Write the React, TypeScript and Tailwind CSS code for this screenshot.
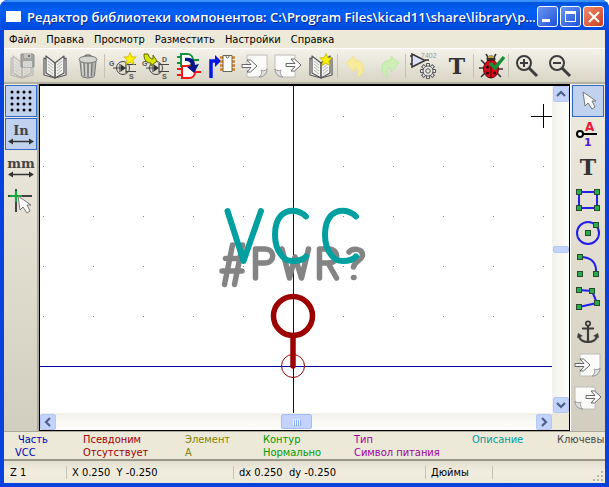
import React from "react";

type Kids = { children?: React.ReactNode };

const Icon = ({ children }: Kids) => (
  <svg viewBox="0 0 28 28" className="h-7 w-7 shrink-0" fill="none" aria-hidden="true">
    {children}
  </svg>
);

const OpenBook = ({ stroke = "#555", fill = "#f2f2ee" }: { stroke?: string; fill?: string }) => (
  <g stroke={stroke} strokeWidth="1.2" strokeLinejoin="round">
    <path d="M3 6v17l11 3 11-3V6l-11 5z" fill={fill} />
    <path d="M5 4v17l9 5 9-5V4l-9 7z" fill={fill} />
    <path d="M14 11v15" strokeWidth="1.6" />
    <path d="M7 9l5 4M7 12l5 4M7 15l5 4M7 18l5 4M21 9l-5 4M21 12l-5 4M21 15l-5 4M21 18l-5 4" stroke="#aaa" strokeWidth="0.9" />
  </g>
);

const Star = ({ x, y }: { x: number; y: number }) => (
  <path
    transform={`translate(${x} ${y})`}
    d="M0-6.5L1.8-2.2 6.2-2 2.8 1 4 5.5 0 3-4 5.5-2.8 1-6.2-2-1.8-2.2z"
    fill="#fff200"
    stroke="#c9b800"
    strokeWidth="0.8"
  />
);

const SaveIcon = () => (
  <Icon>
    <g opacity="0.45"><OpenBook stroke="#888" fill="#ddd" /></g>
    <path d="M13 2h12l1 1v12H13z" fill="#a4a4a2" stroke="#8f8f8d" />
    <path d="M15 9h9v6h-9z" fill="#d6d6d2" />
    <path d="M16 2h7v4h-7z" fill="#c4c4c0" />
    <path d="M20 3h2v2h-2z" fill="#777" />
  </Icon>
);

const BookIcon = () => <Icon><OpenBook /></Icon>;

const TrashIcon = () => (
  <Icon>
    <path d="M6 9h16l-1.500 15c-2 2.500-11 2.500-13 0z" fill="#b4b4b0" stroke="#777" />
    <path d="M10 11l.6 13M14 11v14M18 11l-.6 13" stroke="#777" strokeWidth="1.300" />
    <path d="M8.500 11l.6 12M12 11.500l.2 13M16 11.500l-.2 13" stroke="#e4e4e0" />
    <ellipse cx="14" cy="7.500" rx="9" ry="3.500" fill="#d5d5d1" stroke="#777" />
    <path d="M11 4.500c0-2 6-2 6 0" stroke="#777" strokeWidth="1.500" />
  </Icon>
);

const Transistor = () => (
  <g>
    <circle cx="14" cy="16" r="6.500" stroke="#444" />
    <path d="M4 16h8M17 11v10M17 12.500h10M17 19.500h10M11 12v8" stroke="#444" strokeWidth="1.200" />
    <path d="M12 12.500l5 3.500-5 3.500z" fill="#333" />
    <g fill="#555" className="font-['Liberation_Sans',sans-serif] text-[7px] font-bold">
      <text x="0" y="14">G</text>
      <text x="20" y="27">S</text>
    </g>
  </g>
);

const NewPartIcon = () => <Icon><Transistor /><Star x={21} y={7} /></Icon>;

const LoadPartIcon = () => (
  <Icon>
    <Transistor />
    <text x="20" y="10" fill="#555" className="font-['Liberation_Sans',sans-serif] text-[7px] font-bold">D</text>
    <path d="M2 2c0 7 3 9 7 9v3l6-5-4-6v4c-3 0-4-2-5-5z" fill="#d8e600" stroke="#626b00" />
  </Icon>
);

const GateIcon = () => (
  <Icon>
    <path d="M2 5h4M2 11h4M18 8h6" stroke="#12903a" strokeWidth="2" />
    <path d="M6 2h6c8 0 8 12 0 12H6z" fill="#fff" stroke="#12903a" strokeWidth="2" />
    <path d="M2 17h5M2 23h5M20 20h6" stroke="#f11818" strokeWidth="2" />
    <path d="M7 14h7c8 0 8 12 0 12H7z" fill="#fff" stroke="#f11818" strokeWidth="2" />
    <path d="M10 6c7-1 10 2 10 7l4-1-5 9-7-6 4-1c0-3-1-5-6-5z" fill="#05168c" />
  </Icon>
);

const PinChipIcon = () => (
  <Icon>
    <path d="M3 26V9h5" stroke="#0018e8" strokeWidth="3.500" />
    <path d="M7 3l6 6-6 6z" fill="#0018e8" />
    <path d="M12 5.500h15M12 9.500h15M12 13.500h15M12 17.500h15" stroke="#d98022" strokeWidth="2.500" />
    <path d="M15 3.500h9v16h-9z" fill="#fff" stroke="#665" />
    <path d="M18 4a1.500 2 0 003 0" stroke="#665" />
  </Icon>
);

const sheetBody = "M6 3h20v14c0 5-3 8-7 8H6z";
const sheetFold = "M18 25c3-2 3-5 2-7 2 1 4 1 6-1 0 4-3 8-8 8z";
const arrow = "M0-1.500h9l-4-4.500h3.500l6.500 6-6.500 6H5l4-4.500H0z";

const ImportIcon = () => (
  <Icon>
    <path d={sheetBody} fill="#fbfbfa" stroke="#bcbcb8" />
    <path d={sheetFold} fill="#e2e2e0" stroke="#999" />
    <path transform="translate(1 14)" d={arrow} fill="#fff" stroke="#666" />
  </Icon>
);

const ExportIcon = () => (
  <Icon>
    <g transform="matrix(-1 0 0 1 27 0)">
      <path d={sheetBody} fill="#fbfbfa" stroke="#bcbcb8" />
      <path d={sheetFold} fill="#e2e2e0" stroke="#999" />
    </g>
    <path transform="translate(12 13)" d={arrow} fill="#fff" stroke="#666" />
  </Icon>
);

const NewLibIcon = () => <Icon><OpenBook /><Star x={19} y={8} /></Icon>;

const UndoIcon = () => (
  <Icon>
    <path d="M4 11l8-7v4c8 0 11 6 8 13-1 2-3 3-5 4 3-6 2-9-3-9v4z" fill="#f8eb9c" stroke="#f3e48c" />
  </Icon>
);

const RedoIcon = () => (
  <Icon>
    <path d="M24 11l-8-7v4c-8 0-11 6-8 13 1 2 3 3 5 4-3-6-2-9 3-9v4z" fill="#cdeeb4" stroke="#bfe8a8" />
  </Icon>
);

const GearGateIcon = () => (
  <Icon>
    <text x="11" y="6" fill="#999" className="font-['Liberation_Sans',sans-serif] text-[7px]">7402</text>
    <path d="M0 4h3M0 12h3M15 8h4" stroke="#333" strokeWidth="1.300" />
    <path d="M2 2v13l13-6.500z" fill="#dfe3fa" stroke="#333" strokeWidth="1.500" />
    <g transform="translate(18 19)">
      {[0, 45, 90, 135].map((a) => (
        <path key={a} transform={`rotate(${a})`} d="M-1.500-7.500h3v15h-3z" fill="#eee" stroke="#555" />
      ))}
      <circle r="5" fill="#eee" stroke="#555" />
      <circle r="4" fill="#eee" />
      <circle r="2.300" fill="#ece9d8" stroke="#555" />
    </g>
  </Icon>
);

const TextIcon = () => (
  <Icon>
    <text x="14" y="22" textAnchor="middle" fill="#333" className="font-['DejaVu_Serif',serif] text-[22px] font-bold">T</text>
  </Icon>
);

const BugIcon = () => (
  <Icon>
    <path d="M3 8l5 5M1 16h6M3 25l5-5M23 25l-5-5M25 17h-6M8 2l3 5M18 2l-3 5" stroke="#333" strokeWidth="1.500" />
    <ellipse cx="13" cy="7" rx="4.500" ry="3.500" fill="#333" />
    <path d="M10 5h6" stroke="#e5c94a" strokeWidth="1.500" />
    <ellipse cx="13" cy="17" rx="7.500" ry="9" fill="#d80c1c" stroke="#601" />
    <path d="M13 9v17" stroke="#400" />
    <g fill="#300"><circle cx="9.500" cy="15" r="1.600" /><circle cx="9.500" cy="21" r="1.600" /><circle cx="16.500" cy="21" r="1.600" /><circle cx="16" cy="14" r="1.600" /></g>
    <path d="M12 11l5 5 9-11" stroke="#15913a" strokeWidth="3.500" />
  </Icon>
);

const ZoomGlyph = ({ plus }: { plus?: boolean }) => (
  <Icon>
    <circle cx="11" cy="11" r="7" stroke="#3c3c3c" strokeWidth="2" />
    <path d="M16 16l8 8" stroke="#3c3c3c" strokeWidth="3" />
    <path d={plus ? "M7 11h8M11 7v8" : "M7 11h8"} stroke="#3c3c3c" strokeWidth="2" />
  </Icon>
);

const GridIcon = () => (
  <Icon>
    {[5, 11, 17, 23].map((y) => [5, 11, 17, 23].map((x) => <circle key={`${x}-${y}`} cx={x} cy={y} r="1.500" fill="#000" />))}
  </Icon>
);

const UnitIcon = ({ label }: { label: string }) => (
  <Icon>
    <text x="14" y="15" textAnchor="middle" fill="#444" className="font-['DejaVu_Serif',serif] text-[13px] font-bold">{label}</text>
    <path d="M4 21.500h20" stroke="#333" strokeWidth="1.500" />
    <path d="M1 21.500l5-3v6zM27 21.500l-5-3v6z" fill="#333" />
  </Icon>
);

const Pointer = ({ x, y }: { x: number; y: number }) => (
  <path transform={`translate(${x} ${y})`} d="M0 0l2 14 3-3 4 6 3-2-3-6h4z" fill="#fafafa" stroke="#777" strokeLinejoin="round" />
);

const CursorShapeIcon = () => (
  <Icon>
    <path d="M1 10h24M9 3v23" stroke="#444" strokeWidth="2" />
    <path d="M3 10h12M9 5v11" stroke="#12a83a" strokeWidth="2.200" />
    <Pointer x={11} y={10} />
  </Icon>
);

const PinIcon = () => (
  <Icon>
    <path d="M8 14h15" stroke="#000" strokeWidth="2" />
    <circle cx="6" cy="14" r="3" fill="#fff" stroke="#000" strokeWidth="2" />
    <text x="11" y="11" fill="#ee1c3c" className="font-['DejaVu_Sans',sans-serif] text-[12px] font-bold">A</text>
    <text x="10" y="26" fill="#4a20e0" className="font-['DejaVu_Sans',sans-serif] text-[11px] font-bold">1</text>
  </Icon>
);

const Handles = ({ points }: { points: number[][] }) => (
  <>{points.map(([x, y]) => <rect key={`${x}-${y}`} x={x - 2.500} y={y - 2.500} width="5" height="5" fill="#28ac4e" stroke="#264a2c" />)}</>
);

const RectIcon = () => (
  <Icon><path d="M5 6h18v16H5z" stroke="#2020ea" strokeWidth="2" /><Handles points={[[5, 6], [23, 6], [5, 22], [23, 22]]} /></Icon>
);
const CircleIcon = () => (
  <Icon><circle cx="14" cy="14" r="11" stroke="#2020ea" strokeWidth="2" /><Handles points={[[14, 14], [22, 6]]} /></Icon>
);
const ArcIcon = () => (
  <Icon><path d="M6 5c11 0 17 5 16 17" stroke="#2020ea" strokeWidth="2" /><Handles points={[[6, 5], [6, 22], [22, 22]]} /></Icon>
);
const PolyIcon = () => (
  <Icon><path d="M5 5l13 1 5 12-18 4" stroke="#2020ea" strokeWidth="2" /><Handles points={[[5, 5], [18, 6], [23, 18], [5, 22]]} /></Icon>
);
const AnchorIcon = () => (
  <Icon>
    <circle cx="14" cy="5.500" r="2.200" stroke="#3c3c3c" strokeWidth="1.700" />
    <path d="M14 8v17M8 10.500h12" stroke="#3c3c3c" strokeWidth="2.200" />
    <path d="M5 18c1 8 17 8 18 0" stroke="#3c3c3c" strokeWidth="2.200" />
    <path d="M3 20l1-5 5 3zM25 20l-1-5-5 3z" fill="#3c3c3c" />
  </Icon>
);
const SelectIcon = () => <Icon><Pointer x={9} y={5} /></Icon>;

const ToolButton = ({ label, children }: Kids & { label: string }) => (
  <button type="button" aria-label={label} className="flex h-8 w-[33px] shrink-0 items-center justify-center">
    {children}
  </button>
);

const SideButton = ({ label, active, children }: Kids & { label: string; active?: boolean }) => (
  <button
    type="button"
    aria-label={label}
    aria-pressed={!!active}
    className={`flex h-8 w-8 shrink-0 items-center justify-center border ${active ? "border-[#316ac5] bg-[#c1d2ee]" : "border-transparent"}`}
  >
    {children}
  </button>
);

const Separator = () => <div className="mr-px h-6 w-px shrink-0 bg-[#c5c2b4]" />;

const ScrollButton = ({ label, d }: { label: string; d: string }) => (
  <button type="button" aria-label={label} className="flex h-4 w-4 shrink-0 items-center justify-center rounded-xs border border-[#b4c8f6] bg-[#c3d3fd]">
    <svg viewBox="0 0 10 10" className="h-[10px] w-[10px]" fill="none" aria-hidden="true">
      <path d={d} stroke="#4d6185" strokeWidth="2.200" />
    </svg>
  </button>
);

const MENUS = ["Файл", "Правка", "Просмотр", "Разместить", "Настройки", "Справка"];

const FIELDS = [
  { name: "Часть", value: "VCC", color: "text-[#0000b8]" },
  { name: "Псевдоним", value: "Отсутствует", color: "text-[#a00000]" },
  { name: "Элемент", value: "A", color: "text-[#848400]" },
  { name: "Контур", value: "Нормально", color: "text-[#009a00]" },
  { name: "Тип", value: "Символ питания", color: "text-[#a000a0]" },
  { name: "Описание", value: "", color: "text-[#009a9a]" },
  { name: "Ключевы", value: "", color: "text-[#484848]" },
];

const Drawing = () => (
  <svg viewBox="0 0 512 327" preserveAspectRatio="xMidYMid slice" className="block h-full w-full" fill="none" role="img" aria-label="VCC">
    {[30, 80, 130, 180, 230].map((y) =>
      [3, 53, 103, 153, 203, 253, 303, 353, 403, 453, 503].map((x) => <rect key={`${x}-${y}`} x={x} y={y} width="1" height="1" fill="#888" />)
    )}
    <path d="M253.500 0v327M0 280.500h512" stroke="#0000a8" />
    <g stroke="#848484" strokeWidth="5.500" strokeLinecap="round" strokeLinejoin="round">
      <path d="M192.500 159l-8 39.500M202.500 159l-8 39.500M185.500 172.500h18M182 185h20" />
      <path d="M215.500 192v-29h9c11 0 11 14 0 14h-9" />
      <path d="M242 163l7.500 29 5.500-21 6.500 21 7-29" />
      <path d="M279.500 192v-29h9c11 0 11 14 0 14h-9M288 177l8.500 15" />
      <path d="M309 166c3-4 13.500-4 13.500 3 0 5-8 6-9 12M313.500 191.500h.5" />
    </g>
    <g stroke="#00a0a0" strokeWidth="6" strokeLinecap="round" strokeLinejoin="round">
      <path d="M187.500 125l16 50 17.500-50" />
      <path d="M266 130.500c-7-7-18-8-25-1-8 9-8 29 0 39 3 5 6 6.500 12 6.500s10-1 13-4.500" />
      <path d="M316 130.500c-7-7-18-8-25-1-8 9-8 29 0 39 3 5 6 6.500 12 6.500s10-1 13-4.500" />
    </g>
    <g stroke="#9c0000">
      <circle cx="253" cy="230" r="19.500" strokeWidth="5.500" />
      <path d="M253 250v30" strokeWidth="5.500" strokeLinecap="round" />
      <circle cx="253" cy="280" r="11.500" />
    </g>
    <path d="M491 30.500h21M503.500 18v24" stroke="#000" />
  </svg>
);

export default function App() {
  return (
    <div className="h-screen w-full bg-white">
      <main className="flex h-full w-full flex-col overflow-hidden rounded-t-lg bg-[#0842dc] px-1 pb-1 font-['DejaVu_Sans_Condensed','DejaVu_Sans',sans-serif] text-[11px] leading-[13px] text-black">
        <header className="-mx-1 flex h-[30px] shrink-0 items-center gap-[2px] bg-linear-to-b from-[#0050d8] via-[#0060f8] via-40% to-[#0048dc] pt-[3px] pr-[5px] pl-[6px] shadow-[inset_0_2px_1px_#3b94ff]">
          <div className="mr-1 h-[11px] w-[15px] shrink-0 bg-white" />
          <h1 className="min-w-0 flex-1 overflow-hidden font-['Open_Sans','Noto_Sans',sans-serif] text-[13px] leading-5 font-semibold whitespace-nowrap text-white [text-shadow:1px_1px_#0a2a88]">
            {"Редактор библиотеки компонентов: C:\\Program Files\\kicad11\\share\\library\\p..."}
          </h1>
          <button type="button" aria-label="Свернуть" className="flex h-[21px] w-[21px] items-end rounded-[3px] border border-white bg-linear-to-br from-[#6c95f0] to-[#2050d8] pb-1 pl-1">
            <span className="h-[3px] w-2 bg-white" />
          </button>
          <button type="button" aria-label="Развернуть" className="flex h-[21px] w-[21px] items-center justify-center rounded-[3px] border border-white bg-linear-to-br from-[#6c95f0] to-[#2050d8]">
            <span className="h-[11px] w-[11px] border border-t-3 border-white" />
          </button>
          <button type="button" aria-label="Закрыть" className="flex h-[21px] w-[21px] items-center justify-center rounded-[3px] border border-white bg-linear-to-br from-[#ee8a6c] to-[#cc3a14]">
            <svg viewBox="0 0 12 12" className="h-3 w-3" aria-hidden="true"><path d="M1 1l10 10M11 1L1 11" stroke="#fff" strokeWidth="2" /></svg>
          </button>
        </header>

        <nav className="flex h-[18px] shrink-0 items-center gap-[10px] bg-[#ece9d8] pl-[5px]">
          {MENUS.map((m) => <button key={m} type="button">{m}</button>)}
        </nav>

        <div role="toolbar" className="flex h-9 shrink-0 items-center overflow-hidden border-t border-b-2 border-t-white border-b-[#b5b1a2] bg-linear-to-b from-[#f4f2ea] to-[#d9d5c6] pl-px">
          <ToolButton label="Сохранить"><SaveIcon /></ToolButton>
          <ToolButton label="Выбрать библиотеку"><BookIcon /></ToolButton>
          <ToolButton label="Удалить"><TrashIcon /></ToolButton>
          <Separator />
          <ToolButton label="Новый компонент"><NewPartIcon /></ToolButton>
          <ToolButton label="Загрузить компонент"><LoadPartIcon /></ToolButton>
          <ToolButton label="Создать из текущего"><GateIcon /></ToolButton>
          <ToolButton label="Обновить компонент"><PinChipIcon /></ToolButton>
          <ToolButton label="Импорт"><ImportIcon /></ToolButton>
          <ToolButton label="Экспорт"><ExportIcon /></ToolButton>
          <ToolButton label="Новая библиотека"><NewLibIcon /></ToolButton>
          <Separator />
          <ToolButton label="Отменить"><UndoIcon /></ToolButton>
          <ToolButton label="Повторить"><RedoIcon /></ToolButton>
          <Separator />
          <ToolButton label="Свойства"><GearGateIcon /></ToolButton>
          <ToolButton label="Поля"><TextIcon /></ToolButton>
          <Separator />
          <ToolButton label="Проверить"><BugIcon /></ToolButton>
          <Separator />
          <ToolButton label="Увеличить"><ZoomGlyph plus /></ToolButton>
          <ToolButton label="Уменьшить"><ZoomGlyph /></ToolButton>
        </div>

        <div className="flex min-h-0 flex-1 bg-[#d6d2c4]">
          <div role="toolbar" className="flex w-[35px] shrink-0 flex-col gap-px border-r-2 border-[#aca899] bg-linear-to-b from-[#efece0] to-[#d2cebf] pt-px pl-px">
            <SideButton label="Сетка" active><GridIcon /></SideButton>
            <SideButton label="Дюймы" active><UnitIcon label="In" /></SideButton>
            <SideButton label="Миллиметры"><UnitIcon label="mm" /></SideButton>
            <SideButton label="Форма курсора"><CursorShapeIcon /></SideButton>
          </div>

          <section className="grid min-w-0 flex-1 grid-cols-[minmax(0,1fr)_17px] grid-rows-[minmax(0,1fr)_17px] border border-t-2 border-black bg-white">
            <Drawing />
            <div className="flex flex-col items-center justify-between bg-linear-to-r from-[#f2f1ec] to-[#fefefb]">
              <ScrollButton label="Вверх" d="M1 7l4-4 4 4" />
              <div className="h-[7px] w-4 rounded-xs border border-[#b4c8f6] bg-[#c3d3fd]" />
              <ScrollButton label="Вниз" d="M1 3l4 4 4-4" />
            </div>
            <div className="flex items-center justify-between bg-linear-to-b from-[#f2f1ec] to-[#fefefb]">
              <ScrollButton label="Влево" d="M7 1L3 5l4 4" />
              <div className="flex h-[15px] w-[31px] items-center justify-center gap-px rounded-xs border border-[#a4bcf2] bg-[#c3d3fd]">
                {[0, 1, 2, 3].map((i) => <span key={i} className="h-[6px] w-px bg-[#eef4fe] shadow-[1px_1px_#8cb0f8]" />)}
              </div>
              <ScrollButton label="Вправо" d="M3 1l4 4-4 4" />
            </div>
            <div className="bg-[#ece9d8]" />
          </section>

          <div role="toolbar" className="flex w-[35px] shrink-0 flex-col gap-px border-l border-white bg-linear-to-b from-[#efece0] to-[#d2cebf] pt-px pl-px">
            <SideButton label="Выбор" active><SelectIcon /></SideButton>
            <SideButton label="Вывод"><PinIcon /></SideButton>
            <SideButton label="Текст"><TextIcon /></SideButton>
            <SideButton label="Прямоугольник"><RectIcon /></SideButton>
            <SideButton label="Окружность"><CircleIcon /></SideButton>
            <SideButton label="Дуга"><ArcIcon /></SideButton>
            <SideButton label="Полилиния"><PolyIcon /></SideButton>
            <SideButton label="Точка привязки"><AnchorIcon /></SideButton>
            <SideButton label="Импорт графики"><ImportIcon /></SideButton>
            <SideButton label="Экспорт графики"><ExportIcon /></SideButton>
          </div>
        </div>

        <dl className="grid h-[30px] shrink-0 grid-cols-[68px_102px_78px_91px_118px_85px_minmax(0,1fr)] overflow-hidden border-t border-b-2 border-t-[#aca899] border-b-[#99968a] bg-[#ece9d8] pt-px pl-[11px] whitespace-nowrap">
          {FIELDS.map((f, i) => (
            <div key={f.name} className={f.color}>
              <dt className={i === 0 ? "pl-[3px]" : ""}>{f.name}</dt>
              <dd>{f.value}</dd>
            </div>
          ))}
        </dl>

        <footer className="flex h-[22px] shrink-0 items-center bg-linear-to-b from-[#e4e0d0] via-[#f0ede0] to-[#ece9d8] pt-px whitespace-pre">
          <span className="w-[63px] border-r border-[#c5c2b4] pl-[6px]">Z 1</span>
          <span className="w-[167px] border-r border-[#c5c2b4] pl-[5px]">X 0.250  Y -0.250</span>
          <span className="w-[192px] border-r border-[#c5c2b4] pl-[5px]">dx 0.250  dy -0.250</span>
          <span className="w-[67px] border-r border-[#c5c2b4] pl-[5px]">Дюймы</span>
          <svg viewBox="0 0 12 12" className="mt-auto mr-px mb-px ml-auto h-3 w-3" fill="#b8b4a2" aria-hidden="true">
            <path d="M9 1h2v2H9zM5 5h2v2H5zM9 5h2v2H9zM1 9h2v2H1zM5 9h2v2H5zM9 9h2v2H9z" />
          </svg>
        </footer>
      </main>
    </div>
  );
}
